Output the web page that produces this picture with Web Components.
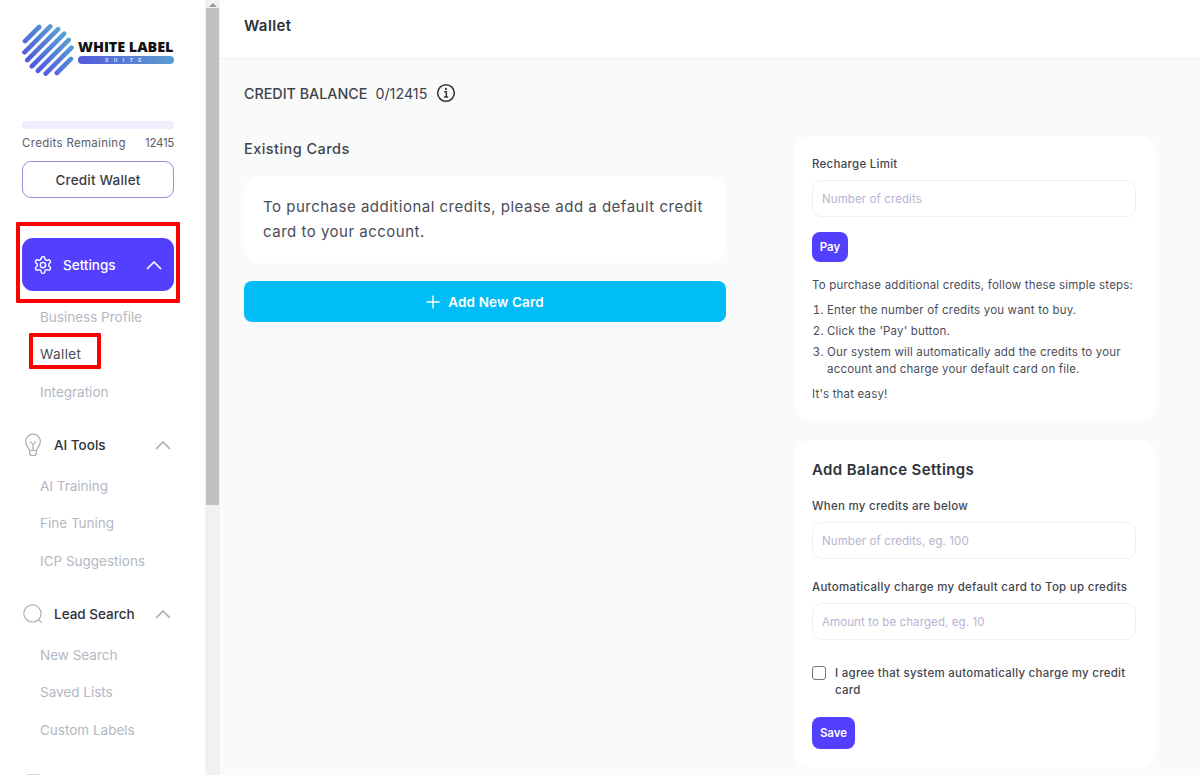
<!doctype html>
<html>
<head>
<meta charset="utf-8">
<title>Wallet</title>
<style>
html,body{margin:0;height:100%;overflow:hidden}
body{font-family:Inter,"Liberation Sans",sans-serif;color:#3a3d46}
</style>
</head>
<body>
<app-shell>
  <wl-sidebar slot="side">
    <wl-logo></wl-logo>
    <wl-credits remaining="12415"></wl-credits>
    <wl-nav-group label="Settings" icon="gear" active>
      <wl-nav-item>Business Profile</wl-nav-item>
      <wl-nav-item current>Wallet</wl-nav-item>
      <wl-nav-item>Integration</wl-nav-item>
    </wl-nav-group>
    <wl-nav-group label="AI Tools" icon="bulb">
      <wl-nav-item>AI Training</wl-nav-item>
      <wl-nav-item>Fine Tuning</wl-nav-item>
      <wl-nav-item>ICP Suggestions</wl-nav-item>
    </wl-nav-group>
    <wl-nav-group label="Lead Search" icon="search">
      <wl-nav-item>New Search</wl-nav-item>
      <wl-nav-item>Saved Lists</wl-nav-item>
      <wl-nav-item>Custom Labels</wl-nav-item>
    </wl-nav-group>
    <wl-nav-group label="" icon="box"></wl-nav-group>
  </wl-sidebar>
  <wl-wallet-page slot="main"></wl-wallet-page>
  <wl-mark slot="over" style="left:16px;top:222px;width:164px;height:81px"></wl-mark>
  <wl-mark slot="over" style="left:29px;top:333px;width:72px;height:36px"></wl-mark>
</app-shell>

<script>
const ICONS = {
  gear: `<svg width="22" height="22" viewBox="0 0 24 24" fill="none" stroke="currentColor" stroke-width="1.7" stroke-linejoin="round"><path d="M12.22 2h-.44a2 2 0 0 0-2 2v.18a2 2 0 0 1-1 1.73l-.43.25a2 2 0 0 1-2 0l-.15-.08a2 2 0 0 0-2.73.73l-.22.38a2 2 0 0 0 .73 2.73l.15.1a2 2 0 0 1 1 1.72v.51a2 2 0 0 1-1 1.74l-.15.09a2 2 0 0 0-.73 2.73l.22.38a2 2 0 0 0 2.73.73l.15-.08a2 2 0 0 1 2 0l.43.25a2 2 0 0 1 1 1.73V20a2 2 0 0 0 2 2h.44a2 2 0 0 0 2-2v-.18a2 2 0 0 1 1-1.73l.43-.25a2 2 0 0 1 2 0l.15.08a2 2 0 0 0 2.73-.73l.22-.39a2 2 0 0 0-.73-2.73l-.15-.08a2 2 0 0 1-1-1.74v-.5a2 2 0 0 1 1-1.74l.15-.09a2 2 0 0 0 .73-2.73l-.22-.38a2 2 0 0 0-2.73-.73l-.15.08a2 2 0 0 1-2 0l-.43-.25a2 2 0 0 1-1-1.73V4a2 2 0 0 0-2-2z"/><circle cx="12" cy="12" r="3.2"/></svg>`,
  bulb: `<svg width="20" height="24" viewBox="0 0 20 24" fill="none" stroke="currentColor" stroke-width="1.2" stroke-linecap="round" stroke-linejoin="round"><path d="M6.5 17.5C6.5 15 2.6 13.5 2.6 8.6a7.4 7.4 0 0 1 14.8 0c0 4.9-3.9 6.4-3.9 8.9z"/><path d="M6.6 17.5v2.6a2.6 2.6 0 0 0 2.6 2.4h1.6a2.6 2.6 0 0 0 2.6-2.4v-2.6"/><path d="M7.4 8.8l2.6 2.6 2.6-2.6M10 11.4v6"/></svg>`,
  search: `<svg width="20" height="20" viewBox="0 0 20 20" fill="none" stroke="currentColor" stroke-width="1.2" stroke-linecap="round"><circle cx="9.4" cy="9.4" r="8.6"/><path d="M15.9 16l2.4 2.4"/></svg>`,
  box: `<svg width="20" height="20" viewBox="0 0 20 20" fill="none" stroke="currentColor" stroke-width="1.2"><rect x="2" y="2" width="16" height="16" rx="3"/></svg>`,
  chevron: `<svg width="16" height="10" viewBox="0 0 16 10" fill="none" stroke="currentColor" stroke-width="1.7" stroke-linecap="round" stroke-linejoin="round"><path d="M1.5 8.5L8 2l6.5 6.5"/></svg>`,
}

// top level frame, sidebar + fake scrollbar + content
customElements.define("app-shell", class extends HTMLElement {
  constructor(){
    super()
    this.attachShadow({mode: "open"}).innerHTML = `
    <style>
      :host{display:flex;height:775px;width:1200px;position:relative;overflow:hidden;background:#f9fafa}
      .bar{width:15px;flex:none;background:#f1f1f1;display:flex;flex-direction:column;align-items:stretch}
      .arrow{height:7px;display:flex;justify-content:center;align-items:flex-end}
      .arrow i{border:4px solid transparent;border-bottom:4px solid #9b9b9b;border-top:0}
      .thumb{height:497px;margin:1px 1px 0;background:#c1c1c1}
      ::slotted([slot=main]){flex:1;min-width:0}
    </style>
    <slot name="side"></slot>
    <div class="bar"><div class="arrow"><i></i></div><div class="thumb"></div></div>
    <slot name="main"></slot>
    <slot name="over"></slot>`
  }
})

customElements.define("wl-sidebar", class extends HTMLElement {
  constructor(){
    super()
    this.attachShadow({mode: "open"}).innerHTML = `
    <style>
      :host{display:block;width:205px;flex:none;box-sizing:border-box;padding:24px 31px 0 22px;background:#fff;overflow:hidden;height:775px}
    </style>
    <slot></slot>`
  }
})

customElements.define("wl-logo", class extends HTMLElement {
  constructor(){
    super()
    let stripes = ""
    for(let k=-3;k<=3;k++){
      const d = k*7.5
      const half = Math.sqrt(26*26-d*d)-3
      const cx = 26+d*0.7071, cy = 26+d*0.7071
      const dx = half*0.7071
      stripes += `<line x1="${cx-dx}" y1="${cy+dx}" x2="${cx+dx}" y2="${cy-dx}"/>`
    }
    this.attachShadow({mode: "open"}).innerHTML = `
    <style>
      :host{display:flex;align-items:center;height:52px;width:152px;position:relative}
      svg{flex:none}
      .word{margin-left:4px;padding-top:2px;width:96px;flex:none}
      .name{font:800 14.4px/16px "Open Sans","Liberation Sans",sans-serif;color:#111;white-space:nowrap;letter-spacing:-.05px;display:block}
      .pill{height:8px;border-radius:4px;background:linear-gradient(90deg,#5558dc,#5a9fd0);color:#dfe6ff;font:700 5px/8px "Liberation Sans",sans-serif;letter-spacing:5.5px;text-align:center;margin-top:1px}
    </style>
    <svg width="52" height="52" viewBox="0 0 52 52">
      <defs><linearGradient id="g" gradientUnits="userSpaceOnUse" x1="6" y1="46" x2="46" y2="6">
        <stop offset="0" stop-color="#4f4fe0"/><stop offset="1" stop-color="#58a8d2"/>
      </linearGradient></defs>
      <g stroke="url(#g)" stroke-width="4.6" stroke-linecap="round">${stripes}</g>
    </svg>
    <div class="word"><span class="name">WHITE LABEL</span><div class="pill">SUITE</div></div>`
  }
})

customElements.define("wl-credits", class extends HTMLElement {
  constructor(){
    super()
    this.attachShadow({mode: "open"}).innerHTML = `
    <style>
      :host{display:block;margin-top:45px}
      .track{height:8px;border-radius:4px;background:#efedfd}
      .row{display:flex;justify-content:space-between;font-size:11.5px;line-height:16px;color:#5b5e68;margin-top:6px}
      .row span:first-child{letter-spacing:.3px}
      .row span:last-child{letter-spacing:-.3px}
      button{display:block;width:100%;height:37px;margin-top:10px;background:#fff;border:1.5px solid #9c8fe0;border-radius:9px;font:500 13.5px Inter,sans-serif;letter-spacing:.2px;color:#3a3d46;padding:0}
    </style>
    <div class="track"></div>
    <div class="row"><span>Credits Remaining</span><span>${this.getAttribute("remaining")}</span></div>
    <button>Credit Wallet</button>`
  }
})

customElements.define("wl-nav-group", class extends HTMLElement {
  constructor(){
    super()
    const icon = ICONS[this.getAttribute("icon")]
    const label = this.getAttribute("label")
    this.attachShadow({mode: "open"}).innerHTML = `
    <style>
      :host{display:block;margin-top:21px}
      :host([active]){margin-top:40px}
      .head{display:flex;align-items:center;height:24px;font-size:13.5px;font-weight:500;color:#2f323a}
      .ico{width:20px;height:24px;display:flex;align-items:center;justify-content:center;color:#a9aeb8;margin-left:1px;flex:none}
      .label{margin-left:11px;flex:1}
      .chev{color:#a9aeb8;display:flex;margin-right:3px}
      :host([active]) .head{height:53px;background:#5340ff;border-radius:11px;color:#fff;padding:0 12px 0 10px}
      :host([active]) .ico,:host([active]) .chev{color:#fff}
      :host([active]) .chev{margin-right:0}
      :host([active]) .label{margin-left:10px}
      .subs{margin-top:11px}
      :host([active]) .subs{margin-top:7.6px}
    </style>
    <div class="head"><span class="ico">${icon}</span><span class="label">${label}</span><span class="chev">${label ? ICONS.chevron : ""}</span></div>
    <div class="subs"><slot></slot></div>`
  }
})

customElements.define("wl-nav-item", class extends HTMLElement {
  constructor(){
    super()
    this.attachShadow({mode: "open"}).innerHTML = `
    <style>
      :host{display:block;height:37.7px;line-height:37.7px;padding-left:18px;font-size:13.5px;color:#b3b8c3;white-space:nowrap}
      :host([current]){color:#4a4d57;letter-spacing:.4px}
    </style>
    <slot></slot>`
  }
})

// red annotation boxes sitting over the screenshot
customElements.define("wl-mark", class extends HTMLElement {
  constructor(){
    super()
    this.attachShadow({mode: "open"}).innerHTML = `
    <style>
      :host{position:absolute;box-sizing:border-box;border:4px solid #f00;border-radius:1px;pointer-events:none}
    </style>`
  }
})

customElements.define("wl-card", class extends HTMLElement {
  constructor(){
    super()
    this.attachShadow({mode: "open"}).innerHTML = `
    <style>
      :host{display:block;background:#fff;border-radius:16px;padding:var(--pad,18px);box-sizing:border-box}
    </style>
    <slot></slot>`
  }
})

customElements.define("wl-field", class extends HTMLElement {
  constructor(){
    super()
    const hint = this.getAttribute("hint")
    this.attachShadow({mode: "open"}).innerHTML = `
    <style>
      :host{display:block}
      label{display:block;font-size:11.5px;line-height:17px;font-weight:500;letter-spacing:.27px;color:#44464f;white-space:nowrap}
      input{display:block;box-sizing:border-box;width:324px;height:37px;margin-top:7px;padding:0 9px;border:1px solid #eff0f3;border-radius:10px;background:#fff;font:11.5px Inter,sans-serif;letter-spacing:.1px;outline:none}
      input::placeholder{color:#b5b5d3;opacity:1}
    </style>
    <label>${this.getAttribute("label")}</label>
    <input placeholder="${hint}">`
  }
})

customElements.define("wl-button", class extends HTMLElement {
  constructor(){
    super()
    this.attachShadow({mode: "open"}).innerHTML = `
    <style>
      :host{display:inline-flex;align-items:center;justify-content:center;box-sizing:border-box;background:var(--bg,#5340ff);color:#fff;font-size:var(--fs,11.5px);font-weight:600;border-radius:var(--r,8px);width:var(--w,36px);height:var(--h,30px)}
    </style>
    <slot></slot>`
  }
})

customElements.define("wl-wallet-page", class extends HTMLElement {
  constructor(){
    super()
    this.attachShadow({mode: "open"}).innerHTML = `
    <style>
      :host{display:block;background:#f9fafa;height:775px;overflow:hidden}
      header{height:59px;box-sizing:border-box;background:#fff;border-bottom:1px solid #eff0f2;padding:0 24px 8px;display:flex;align-items:center;font-size:15px;letter-spacing:.4px;font-weight:600;color:#2f323a}
      .body{padding:0 24px}
      .balance{display:flex;align-items:center;height:28px;margin-top:20px;font-size:14.3px;color:#41444d}
      .balance b{font-weight:500}
      .balance span{margin-left:8px}
      .balance svg{margin-left:9px}
      .cols{display:grid;grid-template-columns:482px 362px;column-gap:68px;margin-top:29px}
      .left{display:flex;flex-direction:column;padding-top:3px}
      h3{margin:0;font-size:14.5px;line-height:20px;font-weight:500;letter-spacing:.45px;color:#41444d}
      .note{--pad:19px 19px;margin-top:17px;font-size:15px;line-height:24.5px;letter-spacing:.5px;color:#4a4d57;height:87px}
      .add{--bg:#00bdf7;--w:482px;--h:41px;--r:8px;--fs:13.5px;margin-top:18px;gap:8px;letter-spacing:.15px}
      .right{display:flex;flex-direction:column;gap:20px}
      .c1{height:284px;--pad:20px 18px}
      .c2{height:328px;--pad:19px 18px}
      .steps{font-size:11.5px;line-height:17px;letter-spacing:.18px;color:#4a4d57;white-space:nowrap}
      .steps p{margin:0}
      ol{margin:8px 0;padding-left:15px}
      li{margin-bottom:4px}
      li:last-child{margin-bottom:0}
      h2{margin:0;font-size:15px;line-height:22px;font-weight:600;letter-spacing:.4px;color:#2f323a}
      .agree{display:flex;gap:9px;font-size:11.5px;line-height:17px;font-weight:500;letter-spacing:.27px;color:#44464f;margin-top:25px}
      .agree i{flex:none;width:12px;height:12px;border:1px solid #767676;border-radius:3px;margin-top:1px;background:#fff}
    </style>
    <header>Wallet</header>
    <div class="body">
      <div class="balance"><b>CREDIT BALANCE</b><span>0/12415</span>
        <svg width="20" height="20" viewBox="0 0 19 19" fill="none" stroke="#33363f" stroke-width="1.5"><circle cx="9.5" cy="9.5" r="7.9"/><path d="M7.8 8.3h2v5M7.6 13.3h4" stroke-width="1.4"/><circle cx="9.5" cy="5.6" r="1" fill="#33363f" stroke="none"/></svg>
      </div>
      <div class="cols">
        <div class="left">
          <h3>Existing Cards</h3>
          <wl-card class="note">To purchase additional credits, please add a default credit card to your account.</wl-card>
          <wl-button class="add"><svg width="14" height="14" viewBox="0 0 14 14" stroke="#fff" stroke-width="1.4"><path d="M7 .5v13M.5 7h13"/></svg>Add New Card</wl-button>
        </div>
        <div class="right">
          <wl-card class="c1">
            <wl-field label="Recharge Limit" hint="Number of credits"></wl-field>
            <wl-button style="margin-top:15px;display:flex">Pay</wl-button>
            <div class="steps" style="margin-top:15px">
              <p>To purchase additional credits, follow these simple steps:</p>
              <ol>
                <li>Enter the number of credits you want to buy.</li>
                <li>Click the 'Pay' button.</li>
                <li>Our system will automatically add the credits to your<br>account and charge your default card on file.</li>
              </ol>
              <p>It's that easy!</p>
            </div>
          </wl-card>
          <wl-card class="c2">
            <h2>Add Balance Settings</h2>
            <wl-field label="When my credits are below" hint="Number of credits, eg. 100" style="margin-top:17px"></wl-field>
            <wl-field label="Automatically charge my default card to Top up credits" hint="Amount to be charged, eg. 10" style="margin-top:20px"></wl-field>
            <div class="agree"><i></i><span>I agree that system automatically charge my credit card</span></div>
            <wl-button style="margin-top:18px;display:flex;--w:43px;--h:32px">Save</wl-button>
          </wl-card>
        </div>
      </div>
    </div>`
  }
})
</script>
</body>
</html>
